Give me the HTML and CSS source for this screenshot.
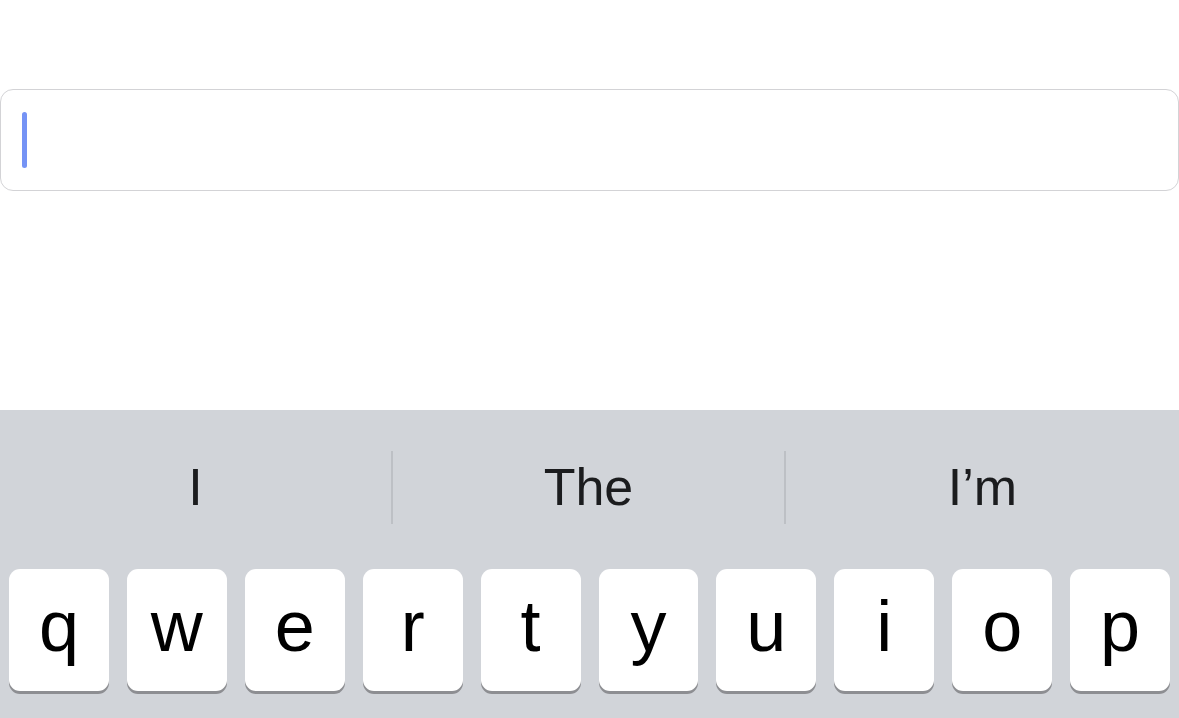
FILE: index.html
```html
<!DOCTYPE html>
<html lang="en">
<head>
<meta charset="utf-8">
<title>Keyboard</title>
<link rel="stylesheet" href="styles.css">
</head>
<body>
<div class="page">
  <div class="field-area">
    <div class="field"><span class="caret"></span></div>
  </div>
  <div class="keyboard">
    <div class="suggestions">
      <div class="suggestion">I</div>
      <div class="divider"></div>
      <div class="suggestion">The</div>
      <div class="divider"></div>
      <div class="suggestion">I’m</div>
    </div>
    <div class="key-row">
      <div class="key">q</div>
      <div class="key">w</div>
      <div class="key">e</div>
      <div class="key">r</div>
      <div class="key">t</div>
      <div class="key">y</div>
      <div class="key">u</div>
      <div class="key">i</div>
      <div class="key">o</div>
      <div class="key">p</div>
    </div>
  </div>
</div>
</body>
</html>
```
FILE: styles.css
```css
html, body {
  margin: 0;
  padding: 0;
  background: #ffffff;
}

.page {
  width: 1179px;
  height: 718px;
  display: flex;
  flex-direction: column;
  overflow: hidden;
  font-family: "Liberation Sans", Arial, sans-serif;
}

.field-area {
  height: 410px;
  padding-top: 89px;
  box-sizing: border-box;
}

.field {
  width: 1179px;
  height: 102px;
  box-sizing: border-box;
  border: 1px solid #d3d3d6;
  border-radius: 13px;
  display: flex;
  align-items: flex-start;
  padding: 22px 0 0 21px;
  background: #ffffff;
}

.caret {
  display: block;
  width: 5px;
  height: 56px;
  border-radius: 3px;
  background: #7593f5;
}

.keyboard {
  flex: 1;
  background: #d1d4d9;
  display: flex;
  flex-direction: column;
}

.suggestions {
  height: 154px;
  display: grid;
  grid-template-columns: 391px 2px 391px 2px 1fr;
  align-items: center;
}

.suggestion {
  text-align: center;
  font-size: 52px;
  line-height: 154px;
  color: #1b1c1e;
}

.divider {
  height: 73px;
  background: #bdc0c5;
}

.key-row {
  margin-top: 5px;
  padding: 0 9px;
  display: flex;
  gap: 18px;
}

.key {
  flex: 1;
  height: 122px;
  box-sizing: border-box;
  background: #ffffff;
  border-radius: 11px;
  box-shadow: 0 3px 0 #8d8e92;
  display: flex;
  align-items: center;
  justify-content: center;
  padding-bottom: 9px;
  font-size: 72px;
  line-height: 1;
  color: #000000;
}
```
